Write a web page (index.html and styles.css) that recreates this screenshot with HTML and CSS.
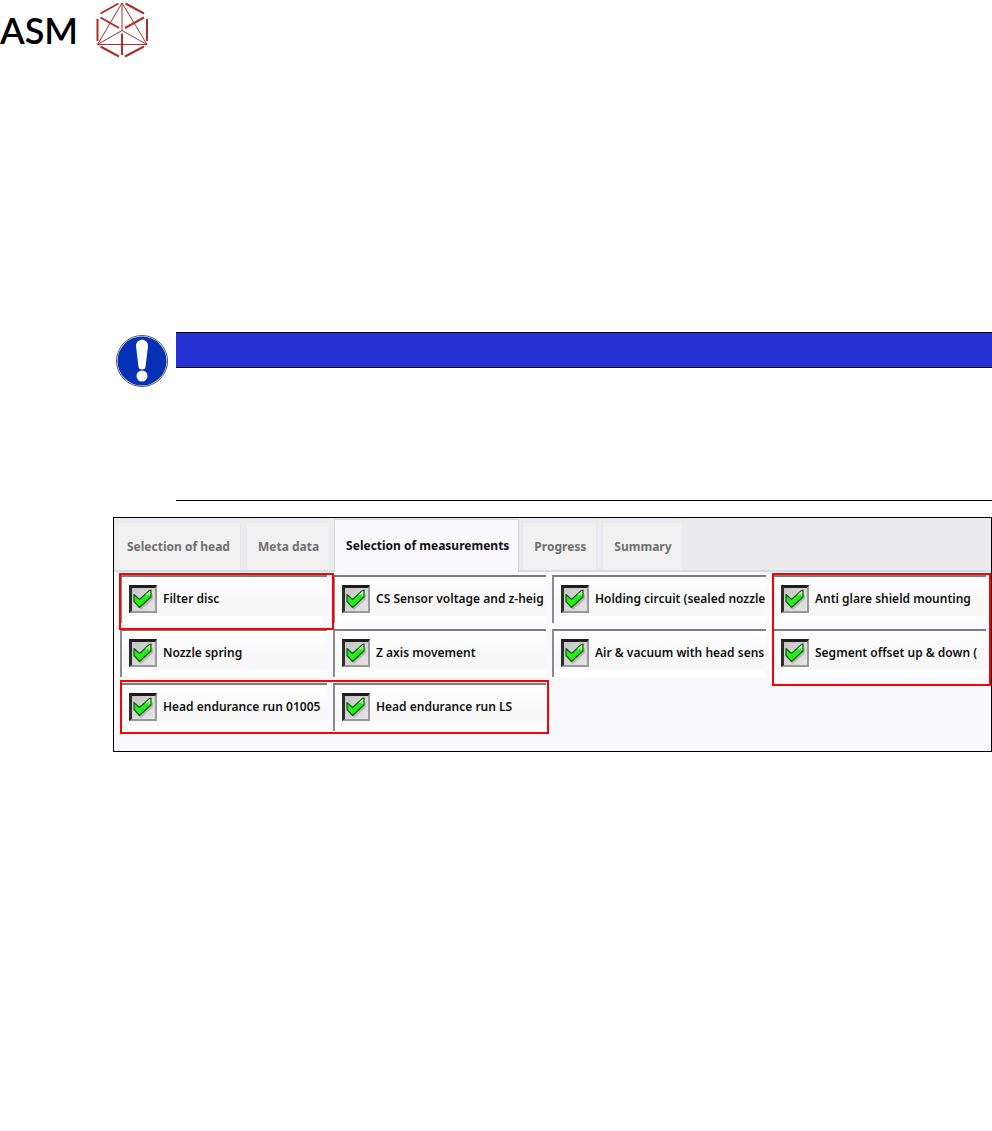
FILE: index.html
```
<!DOCTYPE html>
<html lang="en">
<head>
<meta charset="utf-8">
<meta name="viewport" content="width=device-width, initial-scale=1">
<title>Selection of measurements</title>
<link rel="stylesheet" href="styles.css">
</head>
<body>
<svg class="defs" aria-hidden="true">
  <defs>
    <linearGradient id="green" x1="0" y1="0" x2="1" y2="1">
      <stop offset="0" stop-color="#12d912"/><stop offset=".5" stop-color="#2cf51c"/><stop offset="1" stop-color="#0cb80c"/>
    </linearGradient>
    <symbol id="tick" viewBox="0 0 28 28">
      <path d="M9 21 12 25 24 14 24 9 20 12Z" fill="#888" opacity=".4"/>
      <path d="M5 9.500 10.500 14.500 20.500 5.500 22 5V12L10.500 22.500 5 16.500Z" fill="url(#green)" stroke="#145c14" stroke-width="1.200" stroke-linejoin="round"/>
      <path d="M17 10 20.500 7V11" fill="none" stroke="#c4ffb8" stroke-width="1.200"/>
    </symbol>
  </defs>
</svg>
<header class="brand">
  <span class="brand-name">ASM</span>
  <svg class="brand-mark" viewBox="96 1 53 57" aria-hidden="true">
    <g fill="none" stroke="#ad2f2b">
      <path stroke-width="1" d="M122 3 97.500 44.500H147ZM122 3V30.500M97.500 44.500 122 30.500 147 44.500"/>
      <path stroke-width="2" d="M100.500 13.500 118.500 3.500M125.500 3.500 144 13.500M97.500 19V41M147 19V41M100.500 46.500 119 56.500M125 56.500 144 46.500M100.500 17.500 119 28M144 17.500 125 28M122 33.500V55"/>
    </g>
  </svg>
</header>
<main class="content">
  <section class="notice" aria-label="Notice">
    <svg class="notice-icon" viewBox="0 0 54 54" aria-hidden="true">
      <circle cx="27" cy="27" r="25.500" fill="#fff" stroke="#555" stroke-width="1"/>
      <circle cx="27" cy="27" r="24.500" fill="#0532b4"/>
      <path d="M21 12C21 3.500 33 3.500 33 12L30.500 33Q30 35.500 27 35.500T23.500 33Z" fill="#fff"/>
      <circle cx="27" cy="42" r="5.500" fill="#fff"/>
    </svg>
    <div class="notice-body"><div class="notice-bar"></div></div>
  </section>
  <section class="panel">
    <nav class="tabs" role="tablist">
      <button class="tab" role="tab">Selection of head</button>
      <button class="tab" role="tab">Meta data</button>
      <button class="tab active" role="tab" aria-selected="true">Selection of measurements</button>
      <button class="tab" role="tab">Progress</button>
      <button class="tab" role="tab">Summary</button>
    </nav>
    <div class="options">
      <label class="option"><span class="box"><input type="checkbox" checked><svg><use href="#tick"/></svg></span><span class="text">Filter disc</span></label>
      <label class="option"><span class="box"><input type="checkbox" checked><svg><use href="#tick"/></svg></span><span class="text">CS Sensor voltage and z-heig</span></label>
      <label class="option"><span class="box"><input type="checkbox" checked><svg><use href="#tick"/></svg></span><span class="text">Holding circuit (sealed nozzle</span></label>
      <label class="option"><span class="box"><input type="checkbox" checked><svg><use href="#tick"/></svg></span><span class="text">Anti glare shield mounting</span></label>
      <label class="option"><span class="box"><input type="checkbox" checked><svg><use href="#tick"/></svg></span><span class="text">Nozzle spring</span></label>
      <label class="option"><span class="box"><input type="checkbox" checked><svg><use href="#tick"/></svg></span><span class="text">Z axis movement</span></label>
      <label class="option"><span class="box"><input type="checkbox" checked><svg><use href="#tick"/></svg></span><span class="text">Air &amp; vacuum with head sens</span></label>
      <label class="option"><span class="box"><input type="checkbox" checked><svg><use href="#tick"/></svg></span><span class="text">Segment offset up &amp; down (</span></label>
      <label class="option"><span class="box"><input type="checkbox" checked><svg><use href="#tick"/></svg></span><span class="text">Head endurance run 01005</span></label>
      <label class="option"><span class="box"><input type="checkbox" checked><svg><use href="#tick"/></svg></span><span class="text">Head endurance run LS</span></label>
      <div class="mark mark-filter"></div>
      <div class="mark mark-glare"></div>
      <div class="mark mark-endurance"></div>
    </div>
  </section>
</main>
</body>
</html>
```
FILE: styles.css
```
* { box-sizing: border-box; }
body { margin: 0; background: #fff; font-family: "Noto Sans", sans-serif; font-size: 12px; font-weight: 600; color: #111; }
.defs { position: absolute; width: 0; height: 0; }
.brand { display: flex; align-items: center; gap: 18px; height: 58px; }
.brand-name { font: 600 36px/40px Lato, sans-serif; color: #000; padding-top: 2px; }
.brand-mark { width: 53px; height: 57px; }
.content { padding: 274px 0 0 113px; }
.notice { display: flex; gap: 7px; padding-left: 2px; }
.notice-icon { width: 54px; height: 54px; margin-top: 2px; flex: none; }
.notice-body { flex: 1; min-height: 169px; border-bottom: 1px solid #000; }
.notice-bar { height: 36px; background: #2431d3; border: solid #000; border-width: 1px 0; }
.panel { margin-top: 16px; border: 1px solid #000; background: #faf9ff; padding-bottom: 20px; }
.tabs { display: flex; align-items: flex-end; height: 54px; padding-left: 1px; background: #ebebf0; border-bottom: 2px solid #d9dcdc; }
.tab { height: 48px; margin: 0 5px 0 0; padding: 0 10px 1px 11px; border: 1px solid #e6e8ea; border-bottom: 0; background: #f1f1f1; color: #707070; font: inherit; font-weight: 700; white-space: nowrap; }
.tab.active { height: 53px; margin: 0 3px -2px -1px; padding: 0 9px 2px 11px; border: 1px solid #d0d6d4; border-bottom: 0; background: #faf9ff; color: #111; }
.options { position: relative; display: grid; grid-template-columns: 207fr 213fr 214fr 214fr; grid-auto-rows: 48px; gap: 6px; padding: 3px 5px 0 6px; }
.option { display: flex; align-items: center; gap: 6px; min-width: 0; padding: 0 0 2px 7px; border: 0 solid transparent; border-width: 2px 0 0 2px; border-top-color: #7c7c7c; border-left-color: #8c8c8c; background: linear-gradient(#fff, #f8f8f8 60%, #f9f9fa 84%, #fff 86%) padding-box; }
.box { display: grid; flex: none; width: 28px; height: 28px; }
.box input, .box svg { grid-area: 1 / 1; width: 28px; height: 28px; margin: 0; }
.box input { appearance: none; border: 3px solid; border-color: #1c1c1c #999 #999 #2c2c2c; border-width: 3px 2px 2px 3px; background: linear-gradient(135deg, #c4c4c4, #e6e6e6); }
.box svg { pointer-events: none; }
.box input:not(:checked) + svg { visibility: hidden; }
.text { flex: 1; min-width: 0; overflow: hidden; white-space: nowrap; line-height: 20px; }
.mark { position: absolute; border: 2px solid #f00; pointer-events: none; }
.mark-filter { grid-area: 1 / 1 / 2 / 2; inset: -2px -7px -7px -1px; }
.mark-glare { grid-area: 1 / 4 / 3 / 5; inset: -2px -5px -9px 0; }
.mark-endurance { grid-area: 3 / 1 / 4 / 3; inset: -3px -3px -3px 0; }
```
